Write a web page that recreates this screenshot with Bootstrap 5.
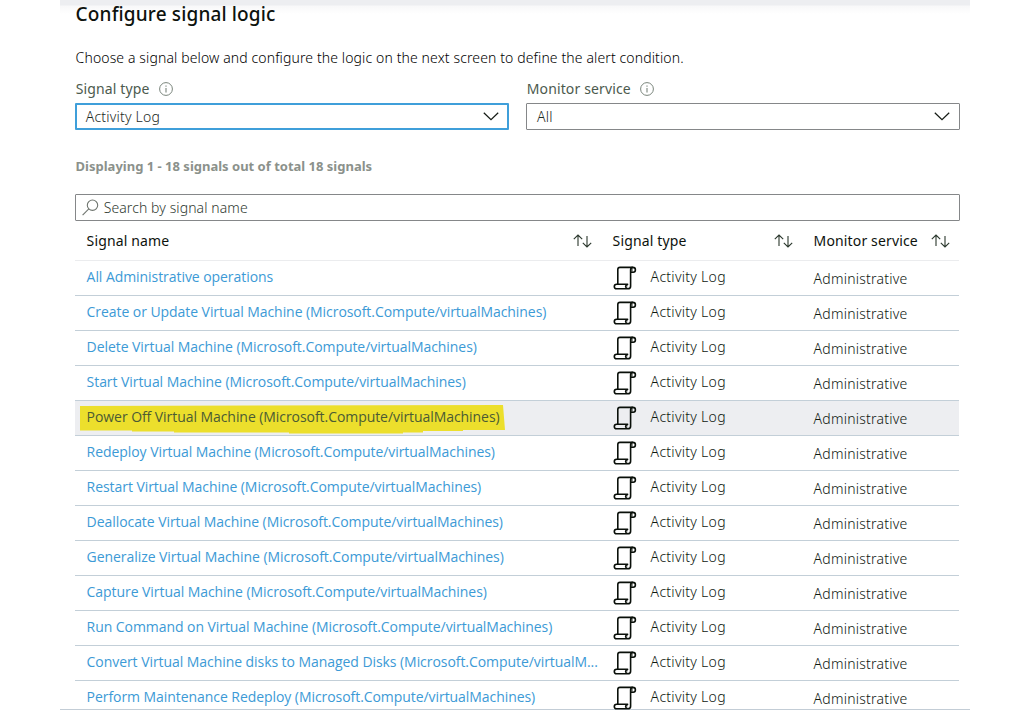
<!DOCTYPE html>
<html lang="en">
<head>
<meta charset="utf-8">
<title>Configure signal logic</title>
<link href="https://cdn.jsdelivr.net/npm/bootstrap@5.3.0/dist/css/bootstrap.min.css" rel="stylesheet">
<style>
body{font-family:"Noto Sans","Open Sans",sans-serif;font-size:14px;line-height:20px;color:#1b1f1b;background:#fff}
.blade{width:910px;height:710px;margin-left:60px;padding:0 10px 0 15px;border-bottom:1px solid #c3cdd6;background:linear-gradient(#edeef1 0,#edeef1 5px,#f8f8f9 6px,#fff 14px) no-repeat}
.blade-title{font-size:19px;line-height:26px;font-weight:500;letter-spacing:.15px;color:#0d120d;padding:1px 0 0 .6px;margin:0}
.intro{margin:21px 0 0;padding-left:.6px;font-weight:300;letter-spacing:.12px;color:#000}
.pickers{margin-top:11px;gap:17px}
.picker{width:434px}
.picker-label{padding-left:.7px;color:#4c5a4e;letter-spacing:.14px;height:20px;gap:9.5px}
.picker-box{height:27px;margin-top:4px;border:1px solid #858789;border-radius:1px;padding:0 9px 0 10px;font-weight:300;letter-spacing:.2px;color:#1c2a1e}
.picker-box.chosen{border:2px solid #3f9fda;padding:0 8px 0 8.8px}
.count{margin:26px 0 0;padding-left:.6px;font-size:13px;font-weight:700;color:#8b918b;line-height:20px}
.search-box{height:27px;margin-top:18px;border:1px solid #858789;border-radius:1px;padding-left:6px;gap:4.7px;font-weight:300;letter-spacing:.09px;color:#303a32}
.signals{width:884px;table-layout:fixed;margin:0;border-collapse:collapse;color:inherit}
.signals th,.signals td{padding:0 0 0 11.6px;border:0;border-bottom:1px solid #c3cfd8;height:35px;vertical-align:middle;white-space:nowrap;background:none}
.signals th{height:39px;padding-top:1px;font-weight:400;letter-spacing:.14px;color:#0d120d;border-bottom-color:#ebecee;padding-right:9.5px}
.signals td{font-weight:300;letter-spacing:.28px;color:#0e170f}
.signals td:first-child{overflow:hidden;text-overflow:ellipsis}
.signals td:first-child a{font:400 14px/20px "Open Sans",sans-serif;letter-spacing:-.062px;color:#3c9ad6;text-decoration:none;position:relative;top:-1px}
.signals td:last-child{padding-top:3px;letter-spacing:.23px}
.signals tr.picked td{background:#edeef1}
.signals tr.picked a{color:#4b5b34}
.marker{position:relative;z-index:0}
.marker svg{position:absolute;left:-6.6px;top:-3px;z-index:-1}
.log{gap:14px}
.log span{position:relative;top:-1px}
svg{display:block;flex:none}
</style>
</head>
<body class="overflow-hidden">
<svg width="0" height="0" class="position-absolute">
 <symbol id="scroll" viewBox="0 0 24 24"><g fill="none" stroke="#0a100a" stroke-width="1.6" stroke-linejoin="round"><path d="M4.8 18.200V3.600Q4.800 1.400 7 1.400H19.800Q22.400 1.400 22.400 3.800T20.200 6.200H17.600"/><path d="M19.800 1.400Q17.600 1.600 17.600 3.900V20.200Q17.600 22.800 14.800 22.800H3.600Q1.300 22.800 1.300 20.500T3.600 18.200H14.600Q12.600 18.900 12.600 20.500T14.800 22.800"/></g><path d="M18 2.200h1.800v3.600H18zM14.600 18.400v2.200H13z" fill="#0a100a" opacity=".55"/></symbol>
 <symbol id="sort" viewBox="0 0 19 14"><path d="M5 12V1M.8 5.2L5 1l4.2 4.2M14 2v11M9.800 8.800L14 13l4.200-4.200" fill="none" stroke="#2b382d" stroke-width="1.1"/></symbol>
 <symbol id="info" viewBox="0 0 14 14"><circle cx="7" cy="7" r="6.4" fill="none" stroke="#7a857c"/><path d="M7 6v4.500M7 3.500v1.200" stroke="#7a857c" stroke-width="1.1"/></symbol>
 <symbol id="chev" viewBox="0 0 16 9"><path d="M.8.8L8 7.600 15.200.8" fill="none" stroke="#151b15" stroke-width="1.25"/></symbol>
</svg>
<main class="blade">
 <h1 class="blade-title">Configure signal logic</h1>
 <p class="intro">Choose a signal below and configure the logic on the next screen to define the alert condition.</p>
 <div class="pickers d-flex">
  <div class="picker">
   <div class="picker-label d-flex align-items-center"><span>Signal type</span><svg width="14" height="14"><use href="#info"/></svg></div>
   <div class="picker-box chosen d-flex align-items-center justify-content-between"><span>Activity Log</span><svg width="16" height="9"><use href="#chev"/></svg></div>
  </div>
  <div class="picker">
   <div class="picker-label d-flex align-items-center"><span>Monitor service</span><svg width="14" height="14"><use href="#info"/></svg></div>
   <div class="picker-box d-flex align-items-center justify-content-between"><span>All</span><svg width="16" height="9"><use href="#chev"/></svg></div>
  </div>
 </div>
 <p class="count">Displaying 1 - 18 signals out of total 18 signals</p>
 <div class="search-box d-flex align-items-center"><svg width="17" height="17" viewBox="0 0 17 17" fill="none" stroke="#6f756f" stroke-width="1.1"><circle cx="10.5" cy="6.2" r="5.2"/><path d="M6.8 9.900L.6 16.200"/></svg><span>Search by signal name</span></div>
 <table class="table signals">
  <colgroup><col style="width:526px"><col style="width:201px"><col style="width:157px"></colgroup>
  <thead><tr>
   <th><div class="d-flex align-items-center justify-content-between">Signal name<svg width="19" height="14"><use href="#sort"/></svg></div></th>
   <th><div class="d-flex align-items-center justify-content-between">Signal type<svg width="19" height="14"><use href="#sort"/></svg></div></th>
   <th><div class="d-flex align-items-center justify-content-between">Monitor service<svg width="19" height="14"><use href="#sort"/></svg></div></th>
  </tr></thead>
  <tbody>
   <tr><td><a href="#">All Administrative operations</a></td><td><div class="log d-flex align-items-center"><svg width="24" height="24"><use href="#scroll"/></svg><span>Activity Log</span></div></td><td>Administrative</td></tr>
   <tr><td><a href="#">Create or Update Virtual Machine (Microsoft.Compute/virtualMachines)</a></td><td><div class="log d-flex align-items-center"><svg width="24" height="24"><use href="#scroll"/></svg><span>Activity Log</span></div></td><td>Administrative</td></tr>
   <tr><td><a href="#">Delete Virtual Machine (Microsoft.Compute/virtualMachines)</a></td><td><div class="log d-flex align-items-center"><svg width="24" height="24"><use href="#scroll"/></svg><span>Activity Log</span></div></td><td>Administrative</td></tr>
   <tr><td><a href="#">Start Virtual Machine (Microsoft.Compute/virtualMachines)</a></td><td><div class="log d-flex align-items-center"><svg width="24" height="24"><use href="#scroll"/></svg><span>Activity Log</span></div></td><td>Administrative</td></tr>
   <tr class="picked"><td><div class="marker"><svg width="425" height="29"><path d="M0 1L423 0l2 25H383v1H343v1.500H323v1H209v-1H94v-1H52v-1H0z" fill="#ecdf2c"/></svg><a href="#">Power Off Virtual Machine (Microsoft.Compute/virtualMachines)</a></div></td><td><div class="log d-flex align-items-center"><svg width="24" height="24"><use href="#scroll"/></svg><span>Activity Log</span></div></td><td>Administrative</td></tr>
   <tr><td><a href="#">Redeploy Virtual Machine (Microsoft.Compute/virtualMachines)</a></td><td><div class="log d-flex align-items-center"><svg width="24" height="24"><use href="#scroll"/></svg><span>Activity Log</span></div></td><td>Administrative</td></tr>
   <tr><td><a href="#">Restart Virtual Machine (Microsoft.Compute/virtualMachines)</a></td><td><div class="log d-flex align-items-center"><svg width="24" height="24"><use href="#scroll"/></svg><span>Activity Log</span></div></td><td>Administrative</td></tr>
   <tr><td><a href="#">Deallocate Virtual Machine (Microsoft.Compute/virtualMachines)</a></td><td><div class="log d-flex align-items-center"><svg width="24" height="24"><use href="#scroll"/></svg><span>Activity Log</span></div></td><td>Administrative</td></tr>
   <tr><td><a href="#">Generalize Virtual Machine (Microsoft.Compute/virtualMachines)</a></td><td><div class="log d-flex align-items-center"><svg width="24" height="24"><use href="#scroll"/></svg><span>Activity Log</span></div></td><td>Administrative</td></tr>
   <tr><td><a href="#">Capture Virtual Machine (Microsoft.Compute/virtualMachines)</a></td><td><div class="log d-flex align-items-center"><svg width="24" height="24"><use href="#scroll"/></svg><span>Activity Log</span></div></td><td>Administrative</td></tr>
   <tr><td><a href="#">Run Command on Virtual Machine (Microsoft.Compute/virtualMachines)</a></td><td><div class="log d-flex align-items-center"><svg width="24" height="24"><use href="#scroll"/></svg><span>Activity Log</span></div></td><td>Administrative</td></tr>
   <tr><td><a href="#">Convert Virtual Machine disks to Managed Disks (Microsoft.Compute/virtualM...</a></td><td><div class="log d-flex align-items-center"><svg width="24" height="24"><use href="#scroll"/></svg><span>Activity Log</span></div></td><td>Administrative</td></tr>
   <tr><td><a href="#">Perform Maintenance Redeploy (Microsoft.Compute/virtualMachines)</a></td><td><div class="log d-flex align-items-center"><svg width="24" height="24"><use href="#scroll"/></svg><span>Activity Log</span></div></td><td>Administrative</td></tr>
  </tbody>
 </table>
</main>
<script src="https://cdn.jsdelivr.net/npm/bootstrap@5.3.0/dist/js/bootstrap.bundle.min.js"></script>
</body>
</html>
